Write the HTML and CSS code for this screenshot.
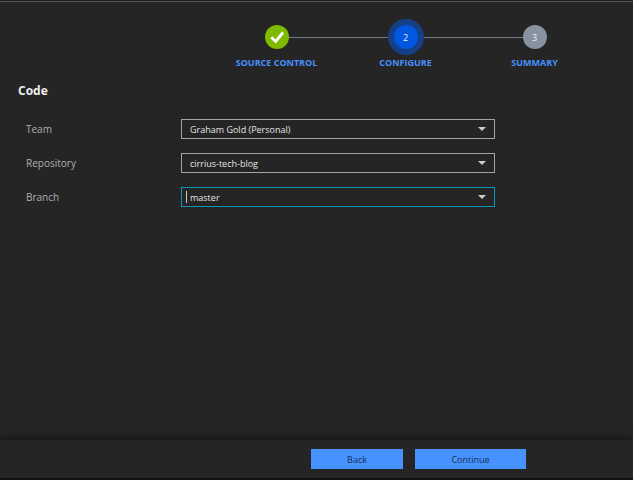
FILE: index.html
```
<!DOCTYPE html>
<html lang="en">
<head>
  <meta charset="utf-8">
  <title>Configure</title>
  <link rel="stylesheet" href="styles.css">
</head>
<body>
  <main>
    <ol class="steps">
      <li class="step done">
        <span class="circle">
          <svg width="24" height="24" viewBox="0 0 24 24" aria-hidden="true">
            <path d="M6.3 12.2l4.4 4.3 7.3-9" fill="none" stroke="#fff" stroke-width="2.8"/>
          </svg>
        </span>
        <span class="step-name">SOURCE CONTROL</span>
      </li>
      <li class="step current" aria-current="step">
        <span class="circle">2</span>
        <span class="step-name">CONFIGURE</span>
      </li>
      <li class="step">
        <span class="circle">3</span>
        <span class="step-name">SUMMARY</span>
      </li>
    </ol>

    <h1>Code</h1>
    <form class="code-form" id="code-form">
      <label for="team">Team</label>
      <div class="select">
        <select id="team"><option>Graham Gold (Personal)</option></select>
      </div>
      <label for="repository">Repository</label>
      <div class="select">
        <select id="repository"><option>cirrius-tech-blog</option></select>
      </div>
      <label for="branch">Branch</label>
      <div class="select active">
        <select id="branch"><option>master</option></select>
      </div>
    </form>
  </main>

  <footer>
    <button type="button" class="back">Back</button>
    <button type="submit" form="code-form" class="continue">Continue</button>
  </footer>
</body>
</html>
```

FILE: styles.css
```
* {
  box-sizing: border-box;
}

body {
  margin: 0;
  min-height: 100vh;
  display: flex;
  flex-direction: column;
  font-family: "Open Sans", "Noto Sans", sans-serif;
  font-size: 10px;
  color: #ddd;
  background-color: #252525;
  border-top: 1px solid #1c1c1c;
  border-bottom: 2px solid #101010;
}

main {
  flex: 1;
  border-top: 1px solid #555;
}

/* progress steps */
.steps {
  display: grid;
  grid-template-columns: repeat(3, 1fr);
  list-style: none;
  margin: 0 34px 0 212px;
  padding: 23px 0 0;
}

.step {
  position: relative;
  display: flex;
  flex-direction: column;
  align-items: center;
  gap: 7px;
}

/* line to the next step */
.step:not(:last-child)::after {
  content: "";
  position: absolute;
  top: 12px;
  left: 50%;
  width: 100%;
  height: 1px;
  background-color: #6f7c87;
}

.circle {
  position: relative;
  z-index: 1;
  display: flex;
  align-items: center;
  justify-content: center;
  width: 24px;
  height: 24px;
  border-radius: 50%;
  font-size: 9px;
  color: #eee;
  background-color: #8793a0;
}

.done .circle {
  background-color: #7fba00;
}

.current .circle {
  z-index: 2;
  background-color: #0058e0;
  box-shadow: 0 0 0 6px #153f86;
}

.step-name {
  font-size: 9px;
  line-height: 14px;
  font-weight: bold;
  color: #4690ff;
  white-space: nowrap;
}

/* form */
h1 {
  margin: 12px 18px 19px;
  font-size: 12px;
  line-height: 18px;
  color: #eee;
}

.code-form {
  display: grid;
  grid-template-columns: 155px 1fr;
  align-items: center;
  row-gap: 14px;
  padding: 0 138px 0 26px;
}

label {
  color: #b0b0b0;
}

.select {
  position: relative;
}

.select::after {
  content: "";
  position: absolute;
  top: 8px;
  right: 9px;
  border: 4px solid transparent;
  border-top-color: #ccc;
  border-bottom: 0;
  pointer-events: none;
}

select {
  display: block;
  appearance: none;
  width: 100%;
  height: 20px;
  padding: 0 24px 0 8px;
  font: inherit;
  font-size: 9px;
  color: #e4e4e4;
  background-color: #252525;
  border: 1px solid #a4a4a4;
  border-radius: 0;
  outline: none;
}

.active select {
  border-color: #0e93b9;
}

/* text cursor */
.active::before {
  content: "";
  position: absolute;
  top: 4px;
  left: 5px;
  width: 1px;
  height: 12px;
  background-color: #ccc;
}

footer {
  display: flex;
  justify-content: flex-end;
  gap: 12px;
  padding: 9px 107px;
  border-top: 1px solid #1a1a1a;
  box-shadow: 0 -2px 8px #181818;
}

button {
  height: 20px;
  padding: 0;
  font: inherit;
  font-size: 9px;
  color: #16304f;
  background-color: #4693ff;
  border: 0;
}

.back {
  width: 92px;
}

.continue {
  width: 111px;
}
```
